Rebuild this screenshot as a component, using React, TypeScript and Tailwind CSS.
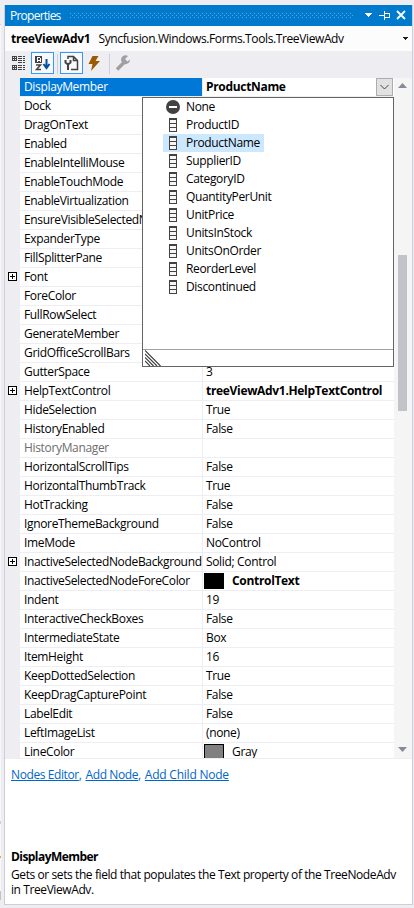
import React from "react";

type Row = { name: string; value?: string; bold?: boolean; expand?: boolean; dim?: boolean; swatch?: string; selected?: boolean };

const rows: Row[] = [
  { name: "DisplayMember", value: "ProductName", bold: true, selected: true },
  { name: "Dock" },
  { name: "DragOnText" },
  { name: "Enabled" },
  { name: "EnableIntelliMouse" },
  { name: "EnableTouchMode" },
  { name: "EnableVirtualization" },
  { name: "EnsureVisibleSelectedNode" },
  { name: "ExpanderType" },
  { name: "FillSplitterPane" },
  { name: "Font", expand: true },
  { name: "ForeColor" },
  { name: "FullRowSelect" },
  { name: "GenerateMember" },
  { name: "GridOfficeScrollBars" },
  { name: "GutterSpace", value: "3" },
  { name: "HelpTextControl", value: "treeViewAdv1.HelpTextControl", bold: true, expand: true },
  { name: "HideSelection", value: "True" },
  { name: "HistoryEnabled", value: "False" },
  { name: "HistoryManager", dim: true },
  { name: "HorizontalScrollTips", value: "False" },
  { name: "HorizontalThumbTrack", value: "True" },
  { name: "HotTracking", value: "False" },
  { name: "IgnoreThemeBackground", value: "False" },
  { name: "ImeMode", value: "NoControl" },
  { name: "InactiveSelectedNodeBackground", value: "Solid; Control", expand: true },
  { name: "InactiveSelectedNodeForeColor", value: "ControlText", bold: true, swatch: "bg-black" },
  { name: "Indent", value: "19" },
  { name: "InteractiveCheckBoxes", value: "False" },
  { name: "IntermediateState", value: "Box" },
  { name: "ItemHeight", value: "16" },
  { name: "KeepDottedSelection", value: "True" },
  { name: "KeepDragCapturePoint", value: "False" },
  { name: "LabelEdit", value: "False" },
  { name: "LeftImageList", value: "(none)" },
  { name: "LineColor", value: "Gray", swatch: "bg-[#808080]" },
];

const fields = ["None", "ProductID", "ProductName", "SupplierID", "CategoryID", "QuantityPerUnit", "UnitPrice", "UnitsInStock", "UnitsOnOrder", "ReorderLevel", "Discontinued"];

const gripColumns = Array.from({ length: 71 }, (_, i) => i * 4 + 1);

function TitleBar() {
  return (
    <div className="flex h-[21px] shrink-0 items-center bg-[#007acc] pl-[5px] text-white">
      <span className="w-[59px] shrink-0 tracking-[-0.75px]">Properties</span>
      <svg width="293" height="21" viewBox="0 0 293 21" className="shrink-0" fill="#59a8de">
        {gripColumns.map((x) => (
          <g key={x}>
            <rect x={x} y="8" width="1" height="1" />
            <rect x={x + 2} y="10" width="1" height="1" />
            <rect x={x} y="12" width="1" height="1" />
          </g>
        ))}
      </svg>
      <svg width="50" height="21" className="shrink-0" shapeRendering="crispEdges">
        <path d="M2 8h8l-4 4z" fill="#fff" />
        <path d="M17 10.500h5M22.500 6v9M22 8.500h6M27.500 8v5M22 12h6" stroke="#fff" fill="none" />
        <path d="M35 6l8 8M43 6l-8 8" stroke="#fff" strokeWidth="1.8" shapeRendering="auto" />
      </svg>
    </div>
  );
}

function Toolbar() {
  return (
    <div className="flex h-[27px] shrink-0 items-start bg-[#eeeef2] pt-px">
      <svg width="140" height="25" fill="none" stroke="#424242">
        <g shapeRendering="crispEdges">
          <rect x="7.500" y="4.500" width="4" height="4" />
          <rect x="7.500" y="13.500" width="4" height="4" />
          <path d="M8 6.500h3M9.500 5v3M8 15.500h3M9.500 14v3M13 4.500h4M18 4.500h2M13 6.500h4M18 6.500h2M13 8.500h4M18 8.500h2M13 10.500h4M18 10.500h2M13 13.500h4M18 13.500h2M13 15.500h4M18 15.500h2M13 17.500h4M18 17.500h2" />
          <rect x="26.500" y=".5" width="22" height="21" fill="#f9f9fb" stroke="#3399ff" />
          <rect x="55.500" y=".5" width="22" height="21" fill="#f9f9fb" stroke="#3399ff" />
          <path d="M52.500 2v20M104.500 2v20" stroke="#cccedb" />
          <rect x="30" y="4" width="7" height="7" fill="#424242" stroke="none" />
          <path d="M32 10V6M35 10V6M32 5.500h3M32 8.500h3" stroke="#fff" />
        </g>
        <path d="M31 13h4.500l-4 4.500H36" strokeWidth="1.500" />
        <path d="M41.500 7v9M38.500 12l3 4 3-4" stroke="#00539c" strokeWidth="2" />
        <path d="M63 7V4.500h5.500l4 4v9H66M68.500 4.500v4h4" strokeWidth="1.500" />
        <path d="M60.500 8v2.500l2.500 2 2.500-2V8M63 12v6" strokeWidth="2" />
        <path d="M87.500 4h6l-3 5h4.500l-9 10 1.500-7h-4z" fill="#9b5a00" stroke="none" />
        <path d="M112 17.500l8-8" stroke="#a0a0a0" strokeWidth="3.500" />
        <path d="M123 4a4.500 4.500 0 1 0 2 3.500l-2.500 2-2.500-2.500z" fill="#a0a0a0" stroke="none" />
      </svg>
    </div>
  );
}

function PropertyRow({ row }: { row: Row }) {
  return (
    <div className="flex h-[19px] shrink-0">
      <div className="flex w-[15px] shrink-0 items-start justify-center bg-[#eeeef2] pt-[4px]">
        {row.expand && (
          <svg width="9" height="9" shapeRendering="crispEdges" fill="#fff" stroke="#000">
            <rect x=".5" y=".5" width="8" height="8" />
            <path d="M2 4.500h5M4.500 2v5" />
          </svg>
        )}
      </div>
      <div className={`w-[182px] shrink-0 overflow-hidden border-b border-[#eeeef2] pl-1 leading-[18px] ${row.selected ? "bg-[#0078d7] text-white" : row.dim ? "text-[#6d6d6d]" : ""}`}>
        {row.name}
      </div>
      <div className="flex min-w-0 grow items-center border-b border-l border-[#eeeef2] leading-[18px]">
        {row.swatch && <span className={`ml-px mr-[5px] h-4 w-5 border border-black ${row.swatch}`} />}
        <span className={row.bold ? "pl-[3px] font-bold tracking-[-0.32px]" : "pl-[3px]"}>{row.value}</span>
        {row.selected && (
          <span className="ml-auto mr-px flex h-[18px] w-[17px] items-center justify-center border border-[#adadad] bg-[#e1e1e1]">
            <svg width="9" height="6" fill="none" stroke="#444"><path d="M.5 1l4 4 4-4" /></svg>
          </span>
        )}
      </div>
    </div>
  );
}

function FieldPopup() {
  return (
    <div className="absolute left-[137px] top-[19px] flex h-[270px] w-[252px] flex-col border border-[#646464] bg-white">
      <div className="grow pl-5">
        {fields.map((f) => (
          <div key={f} className="flex h-[18px] items-center">
            <span className={`flex h-[18px] items-center pr-1 leading-[18px] ${f === "ProductName" ? "bg-[#cce8ff]" : ""}`}>
              <span className="flex w-[23px] justify-center pr-[3px]">
                {f === "None" ? (
                  <svg width="14" height="14"><circle cx="7" cy="7" r="7" fill="#424242" /><path d="M3 7h8" stroke="#fff" strokeWidth="2" /></svg>
                ) : (
                  <svg width="8" height="14" shapeRendering="crispEdges" fill="#f6f6f6" stroke="#424242">
                    <rect x=".5" y=".5" width="7" height="13" />
                    <path d="M0 1.500h8M0 5.500h8M0 9.500h8" />
                  </svg>
                )}
              </span>
              {f}
            </span>
          </div>
        ))}
      </div>
      <div className="h-[17px] shrink-0 border-t border-[#a0a0a0] pl-0.5">
        <svg width="16" height="16" stroke="#404040" strokeWidth="1.200"><path d="M0 .5l15.500 15.500M0 4l12 12M0 7.500l8.500 8.500M0 11l5 5" /></svg>
      </div>
    </div>
  );
}

export default function App() {
  return (
    <div className="flex h-[908px] w-[414px] overflow-hidden bg-[#eeeef2] font-['Open_Sans',sans-serif] text-[12px] tracking-[-0.34px] text-black">
      <div className="flex w-1 shrink-0 flex-col">
        <div className="mt-6 h-px w-px bg-[#cccedb]" />
        <div className="h-[796px] w-px bg-[#f7f7f9]" />
        <div className="h-[3px] w-px bg-[#cccedb]" />
        <div className="h-8 w-px bg-[#f7f7f9]" />
        <div className="h-0.5 w-px bg-[#e0a848]" />
        <div className="h-[33px] w-px bg-[#f7f7f9]" />
        <div className="h-[9px] w-px bg-[#c2c3c9]" />
      </div>
      <div className="mb-[3px] mt-[5px] flex w-[409px] shrink-0 flex-col whitespace-nowrap border-x border-b border-[#cccedb] bg-white">
        <TitleBar />
        <div className="flex h-[25px] shrink-0 items-center bg-[#fcfcfc] pl-1.5 pr-[4px]">
          <span className="w-[87.500px] font-bold tracking-[-0.32px]">treeViewAdv1</span>
          <span className="grow tracking-[-0.38px]">Syncfusion.Windows.Forms.Tools.TreeViewAdv</span>
          <svg width="5" height="3" shapeRendering="crispEdges"><path d="M0 0h5L2.500 3z" fill="#1e1e1e" /></svg>
        </div>
        <Toolbar />
        <div className="relative flex h-[681px] shrink-0 border-b border-[#eeeef2]">
          <div className="flex w-[389px] flex-col overflow-hidden">
            {rows.map((r) => <PropertyRow key={r.name} row={r} />)}
          </div>
          <div className="flex grow flex-col items-center bg-[#f5f5f5] pr-px pt-[5px]">
            <svg width="9" height="5" className="shrink-0"><path d="M0 5h9L4.500 0z" fill="#868999" /></svg>
            <div className="mt-[167px] h-[156px] w-[9px] shrink-0 bg-[#c2c3c9]" />
            <svg width="9" height="5" className="mt-[336px] shrink-0"><path d="M0 0h9L4.500 5z" fill="#868999" /></svg>
          </div>
          <FieldPopup />
        </div>
        <div className="flex h-[90px] shrink-0 gap-1 pl-1.5 pt-[7px] leading-[18px] tracking-[-0.4px] text-[#0066cc]">
          <span><u>Nodes Editor</u>,</span><span><u>Add Node</u>,</span><u className="tracking-[-0.22px]">Add Child Node</u>
        </div>
        <div className="pl-1.5 leading-[15px]">
          <div className="mb-[3px] font-bold tracking-[-0.56px]">DisplayMember</div>
          <div className="tracking-[-0.41px]">Gets or sets the field that populates the Text property of the TreeNodeAdv<br />in TreeViewAdv.</div>
        </div>
      </div>
    </div>
  );
}
